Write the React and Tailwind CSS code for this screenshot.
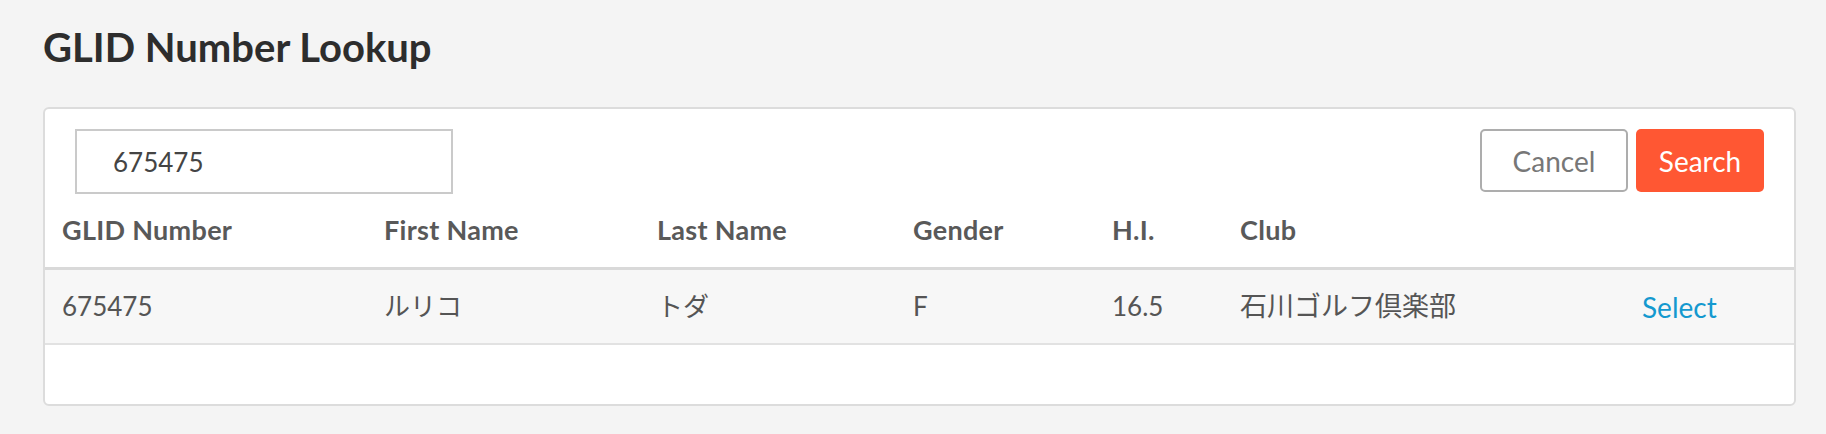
import React, { useState } from 'react';

const rows = [
  { glid: '675475', first: 'ルリコ', last: 'トダ', gender: 'F', hi: '16.5', club: '石川ゴルフ倶楽部' },
];

const cols = 'grid grid-cols-[322px_273px_256px_199px_128px_402px_1fr]';

export default function App() {
  const [query, setQuery] = useState('675475');

  return (
    <div
      className="min-h-screen w-full bg-[#f4f4f4] px-[43px] pt-[23px]"
      style={{ fontFamily: "Lato, 'Noto Sans CJK JP', sans-serif" }}
    >
      <h1 className="text-[40px] leading-[48px] font-bold text-[#2d2d2d]">GLID Number Lookup</h1>

      <div className="mt-[36px] w-[1753px] bg-white border-2 border-[#dcdcdc] rounded-[6px] pb-[59px]">
        {/* search bar */}
        <div className="flex items-start justify-between pt-[20px] pl-[30px] pr-[30px]">
          <input
            value={query}
            onChange={(e) => setQuery(e.target.value)}
            className="w-[378px] h-[65px] border-2 border-[#cacaca] pl-[36px] text-[26px] text-[#444] outline-none"
          />
          <div className="flex gap-[8px]">
            <button className="w-[148px] h-[63px] border-2 border-[#adadad] rounded-[5px] text-[28px] text-[#777] bg-white">
              Cancel
            </button>
            <button className="w-[128px] h-[63px] rounded-[5px] text-[28px] text-white bg-[#ff5733]">
              Search
            </button>
          </div>
        </div>

        {/* table header */}
        <div className={`${cols} h-[76px] items-center border-b-[3px] border-[#d9d9d9] text-[27px] tracking-[0.3px] font-bold text-[#595959]`}>
          <div className="pl-[17px]">GLID Number</div>
          <div className="pl-[17px]">First Name</div>
          <div className="pl-[17px]">Last Name</div>
          <div className="pl-[17px]">Gender</div>
          <div className="pl-[17px]">H.I.</div>
          <div className="pl-[17px]">Club</div>
          <div />
        </div>

        {/* results */}
        {rows.map((r) => (
          <div
            key={r.glid}
            className={`${cols} h-[75px] items-center bg-[#f7f7f7] border-b-2 border-[#e2e2e2] text-[26px] text-[#555]`}
          >
            <div className="pl-[17px]">{r.glid}</div>
            <div className="pl-[17px]">{r.first}</div>
            <div className="pl-[17px]">{r.last}</div>
            <div className="pl-[17px]">{r.gender}</div>
            <div className="pl-[17px]">{r.hi}</div>
            <div className="pl-[17px] text-[27px]">{r.club}</div>
            <div className="pl-[17px]">
              <button className="text-[28px] text-[#1499cf]">Select</button>
            </div>
          </div>
        ))}
      </div>
    </div>
  );
}
